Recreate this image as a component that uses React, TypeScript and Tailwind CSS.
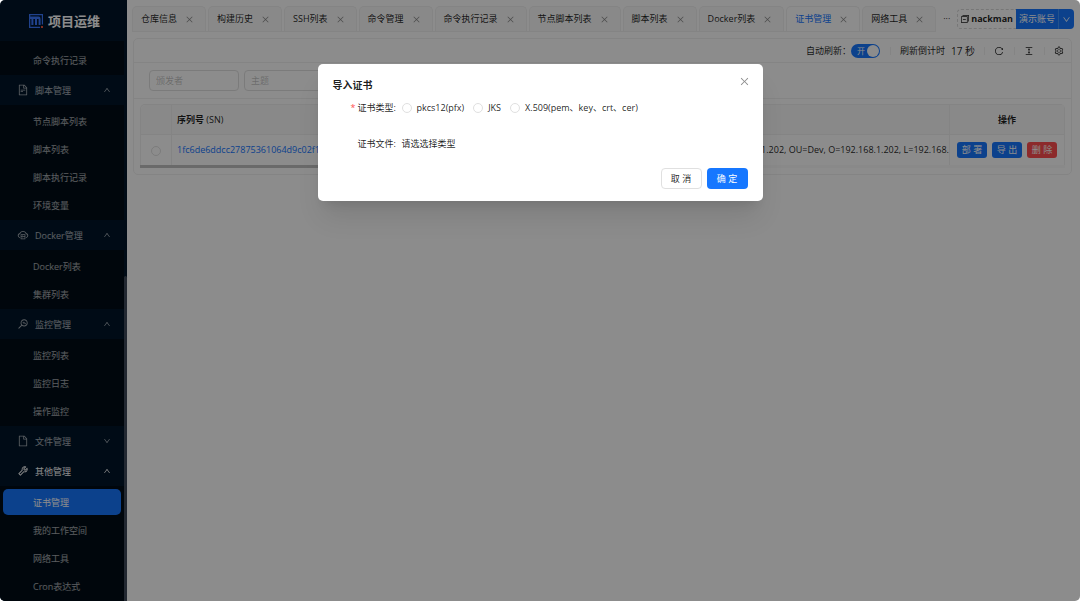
import React, { useState } from "react";
import {
  AiOutlineClose,
  AiOutlineCloudServer,
  AiOutlineColumnHeight,
  AiOutlineDown,
  AiOutlineFile,
  AiOutlineFileText,
  AiOutlineMonitor,
  AiOutlineReload,
  AiOutlineSetting,
  AiOutlineSwitcher,
  AiOutlineTool,
  AiOutlineUp,
} from "react-icons/ai";

interface MenuGroup {
  title: string;
  icon: React.ReactNode;
  open: boolean;
  active?: boolean;
  items: string[];
}

const groups: MenuGroup[] = [
  {
    title: "脚本管理",
    icon: <AiOutlineFileText className="size-3" />,
    open: true,
    items: ["节点脚本列表", "脚本列表", "脚本执行记录", "环境变量"],
  },
  {
    title: "Docker管理",
    icon: <AiOutlineCloudServer className="size-3" />,
    open: true,
    items: ["Docker列表", "集群列表"],
  },
  {
    title: "监控管理",
    icon: <AiOutlineMonitor className="size-3" />,
    open: true,
    items: ["监控列表", "监控日志", "操作监控"],
  },
  {
    title: "文件管理",
    icon: <AiOutlineFile className="size-3" />,
    open: false,
    items: [],
  },
  {
    title: "其他管理",
    icon: <AiOutlineTool className="size-3" />,
    open: true,
    active: true,
    items: ["证书管理", "我的工作空间", "网络工具", "Cron表达式"],
  },
];

const tabs = [
  "仓库信息",
  "构建历史",
  "SSH列表",
  "命令管理",
  "命令执行记录",
  "节点脚本列表",
  "脚本列表",
  "Docker列表",
  "证书管理",
  "网络工具",
];

const certTypes = [
  { value: "pkcs12", label: "pkcs12(pfx)" },
  { value: "jks", label: "JKS" },
  { value: "x509", label: "X.509(pem、key、crt、cer)" },
];

const current = "证书管理";

function Logo() {
  return (
    <svg viewBox="0 0 14 14" className="size-[14px]" fill="none">
      <path d="M0 0H14V10.5H12.8V1.3H1.3V12.7H11V14H0Z" fill="#3b78ff" />
      <path d="M0 2.6H9.5Q11.6 2.6 11.6 5V11H9.6V5H8V11H6V5H4.4V11H2.4V5H0Z" fill="#3b78ff" />
      <path d="M12 12H14V14H12Z" fill="#e5533c" />
    </svg>
  );
}

function SubItem({ label }: { label: string }) {
  return (
    <li className="mx-[3px] mb-0.5">
      <a
        href="#"
        className={
          label === current
            ? "flex h-[26px] items-center rounded-[5px] bg-[#1677ff] pt-px pl-[30px] text-white"
            : "flex h-[26px] items-center rounded-[5px] pt-px pl-[30px] text-white/65"
        }
      >
        {label}
      </a>
    </li>
  );
}

function Sidebar() {
  return (
    <aside className="flex w-[127px] shrink-0 flex-col bg-[#001529]">
      <div className="flex h-[41px] shrink-0 items-center justify-center gap-[5px] pt-px pl-0.5 text-[13px] font-bold text-white">
        <Logo />
        项目运维
      </div>
      <nav className="flex grow">
        <div className="grow bg-[#000c17]">
          <ul className="pt-[6px]">
            <SubItem label="命令执行记录" />
          </ul>
          {groups.map((group) => (
            <div key={group.title}>
              <button
                className={
                  group.active
                    ? "flex h-[30px] w-full items-center bg-[#001529] pr-[13px] pl-[17px] text-white"
                    : "flex h-[30px] w-full items-center bg-[#001529] pr-[13px] pl-[17px] text-white/65"
                }
              >
                <span className="mr-[6px]">{group.icon}</span>
                <span className="grow pt-px text-left">{group.title}</span>
                {group.open ? (
                  <AiOutlineUp className="size-2" />
                ) : (
                  <AiOutlineDown className="size-2" />
                )}
              </button>
              {group.open && (
                <ul className="pt-[3px]">
                  {group.items.map((item) => (
                    <SubItem key={item} label={item} />
                  ))}
                </ul>
              )}
            </div>
          ))}
        </div>
        {/* scrollbar */}
        <div className="flex w-[3px] flex-col justify-end">
          <div className="h-[58%] rounded-t-sm bg-[#3f4a59]" />
        </div>
      </nav>
    </aside>
  );
}

function TopBar() {
  return (
    <header className="flex items-start pt-[6px] pl-[5px]">
      <div className="flex h-[26px] shrink-0 gap-0.5 border-b border-[#f0f0f0]">
        {tabs.map((tab) => (
          <div
            key={tab}
            className={
              tab === current
                ? "flex items-center gap-2 rounded-t-[5px] border border-b-0 border-[#f0f0f0] bg-white pr-[11px] pl-2 text-[#1677ff]"
                : "flex items-center gap-2 rounded-t-[5px] border border-b-0 border-[#f0f0f0] bg-[#fafafa] pr-[11px] pl-2"
            }
          >
            <button>{tab}</button>
            <button aria-label={"关闭" + tab} className="text-black/45">
              <AiOutlineClose className="size-[9px]" />
            </button>
          </div>
        ))}
      </div>
      <button aria-label="更多" className="h-[26px] grow text-center">
        ···
      </button>
      <div className="mt-[3px] mr-[6px] flex h-5 shrink-0">
        <button className="flex items-center gap-px rounded-l-[4px] border border-r-0 border-dashed border-[#d9d9d9] pr-[3px] pl-0.5 font-bold">
          <AiOutlineSwitcher className="size-[10px]" />
          nackman
        </button>
        <button className="bg-[#1677ff] px-[3px] text-white">演示账号</button>
        <button
          aria-label="账号菜单"
          className="rounded-r-[4px] border-l border-[#4096ff] bg-[#1677ff] px-[3px] text-white"
        >
          <AiOutlineDown className="size-[9px]" />
        </button>
      </div>
    </header>
  );
}

function Toolbar() {
  const [auto, setAuto] = useState(true);

  return (
    <div className="flex h-6 items-center justify-end border-b border-[#f0f0f0] pr-[7px]">
      <span>自动刷新：</span>
      <button
        role="switch"
        aria-checked={auto}
        aria-label="自动刷新"
        onClick={() => setAuto(!auto)}
        className="flex h-[14px] w-[29px] items-center justify-between rounded-full bg-[#1677ff] pr-px pl-[6px] text-[8px] text-white"
      >
        开
        <span className="size-3 rounded-full bg-white" />
      </button>
      <span className="ml-[10px] h-2 border-l border-[#f0f0f0]" />
      <span className="ml-[9px]">刷新倒计时</span>
      <span className="ml-[6px] text-[10px]">17 秒</span>
      <span className="ml-[9px] h-2 border-l border-[#f0f0f0]" />
      <button aria-label="刷新" className="ml-[9px]">
        <AiOutlineReload className="size-[10px]" />
      </button>
      <span className="ml-[10px] h-2 border-l border-[#f0f0f0]" />
      <button aria-label="密度" className="ml-[9px]">
        <AiOutlineColumnHeight className="size-[10px]" />
      </button>
      <span className="ml-[10px] h-2 border-l border-[#f0f0f0]" />
      <button aria-label="设置" className="ml-[9px]">
        <AiOutlineSetting className="size-[10px]" />
      </button>
    </div>
  );
}

function CertTable() {
  return (
    <div className="mx-[6px] mt-[5px] mb-[6px]">
      <table className="w-full table-fixed border-separate border-spacing-0 rounded-t-[5px] border border-b-0 border-[#f0f0f0]">
        <thead>
          <tr className="h-[30px] bg-[#fafafa] text-left">
            <th className="w-[31px] rounded-tl-[5px] border-r border-b border-[#f0f0f0]" />
            <th className="w-[280px] border-b border-[#f0f0f0] px-[5px]">
              序列号 <span className="font-medium">(SN)</span>
            </th>
            <th className="border-b border-[#f0f0f0]" />
            <th className="w-[115px] border-b border-l border-[#f0f0f0] text-center">操作</th>
          </tr>
        </thead>
        <tbody>
          <tr className="h-[30px]">
            <td className="border-r border-[#f0f0f0] text-center">
              <input
                type="radio"
                name="cert"
                aria-label="选择证书"
                className="size-[10px] appearance-none rounded-full border border-[#e0e0e0] align-middle checked:border-[3px] checked:border-[#1677ff]"
              />
            </td>
            <td className="overflow-hidden px-[5px] whitespace-nowrap">
              <a href="#" className="text-[#1677ff]">
                1fc6de6ddcc27875361064d9c02f1417
              </a>
            </td>
            <td className="overflow-hidden text-right whitespace-nowrap">
              CN=192.168.1.202, OU=Dev, O=192.168.1.202, L=192.168.
            </td>
            <td className="border-l border-[#f0f0f0]">
              <div className="flex justify-center gap-[5px] text-white">
                <button className="h-4 w-[30px] rounded-[3px] bg-[#1677ff]">部 署</button>
                <button className="h-4 w-[30px] rounded-[3px] bg-[#1677ff]">导 出</button>
                <button className="h-4 w-[30px] rounded-[3px] bg-[#ff4d4f]">删 除</button>
              </div>
            </td>
          </tr>
        </tbody>
      </table>
      <div className="h-[3px] bg-[#fafafa]">
        <div className="h-full w-3/5 bg-[#c1c1c1]" />
      </div>
    </div>
  );
}

function ImportDialog() {
  const [type, setType] = useState("");

  return (
    <div className="absolute inset-0 bg-black/45 px-4 pt-16">
      <div
        role="dialog"
        aria-labelledby="dialog-title"
        className="mx-auto max-w-[445px] rounded-[5px] bg-white px-[15px] pt-[13px] pb-3 shadow-xl"
      >
        <div className="flex items-center justify-between">
          <h2 id="dialog-title" className="text-[10px] leading-4 font-bold">
            导入证书
          </h2>
          <button aria-label="关闭" className="-mt-2 -mr-0.5 text-black/45">
            <AiOutlineClose className="size-[11px]" />
          </button>
        </div>
        <form className="whitespace-nowrap">
          <div
            role="radiogroup"
            aria-labelledby="cert-type"
            className="mt-[5px] flex h-5 items-center pl-[18px]"
          >
            <span className="w-[7px] text-[#ff4d4f]">*</span>
            <span id="cert-type" className="w-[44px]">
              证书类型:
            </span>
            {certTypes.map((item) => (
              <label key={item.value} className="mr-[9px] flex items-center gap-[5px]">
                <input
                  type="radio"
                  name="type"
                  value={item.value}
                  checked={type === item.value}
                  onChange={() => setType(item.value)}
                  className="size-[10px] appearance-none rounded-full border border-[#e0e0e0] checked:border-[3px] checked:border-[#1677ff]"
                />
                {item.label}
              </label>
            ))}
          </div>
          <div className="mt-4 flex h-5 items-center pl-[25px]">
            <span className="w-[44px]">证书文件:</span>
            <span>请选选择类型</span>
          </div>
        </form>
        <div className="mt-[14px] flex justify-end gap-[5px]">
          <button className="h-[21px] w-[41px] rounded-[4px] border border-[#e0e0e0]">取 消</button>
          <button className="h-[21px] w-[41px] rounded-[4px] bg-[#1677ff] text-white">确 定</button>
        </div>
      </div>
    </div>
  );
}

export default function App() {
  return (
    <div className="relative flex min-h-screen overflow-hidden rounded-[5px] bg-white font-['Open_Sans','Noto_Sans_CJK_SC',sans-serif] text-[9px] leading-[14px] text-black/88">
      <Sidebar />
      <div className="min-w-0 grow">
        <TopBar />
        <main className="mt-[6px] mr-2 ml-[6px] rounded-[5px] border border-[#f0f0f0]">
          <Toolbar />
          <div className="flex gap-[5px] border-b border-[#f0f0f0] px-[15px] py-[7px]">
            <input
              aria-label="颁发者"
              placeholder="颁发者"
              className="h-[21px] w-[90px] rounded-[4px] border border-[#e0e0e0] px-[6px] placeholder:text-black/25"
            />
            <input
              aria-label="主题"
              placeholder="主题"
              className="h-[21px] w-[90px] rounded-[4px] border border-[#e0e0e0] px-[6px] placeholder:text-black/25"
            />
          </div>
          <CertTable />
        </main>
      </div>
      <ImportDialog />
    </div>
  );
}
